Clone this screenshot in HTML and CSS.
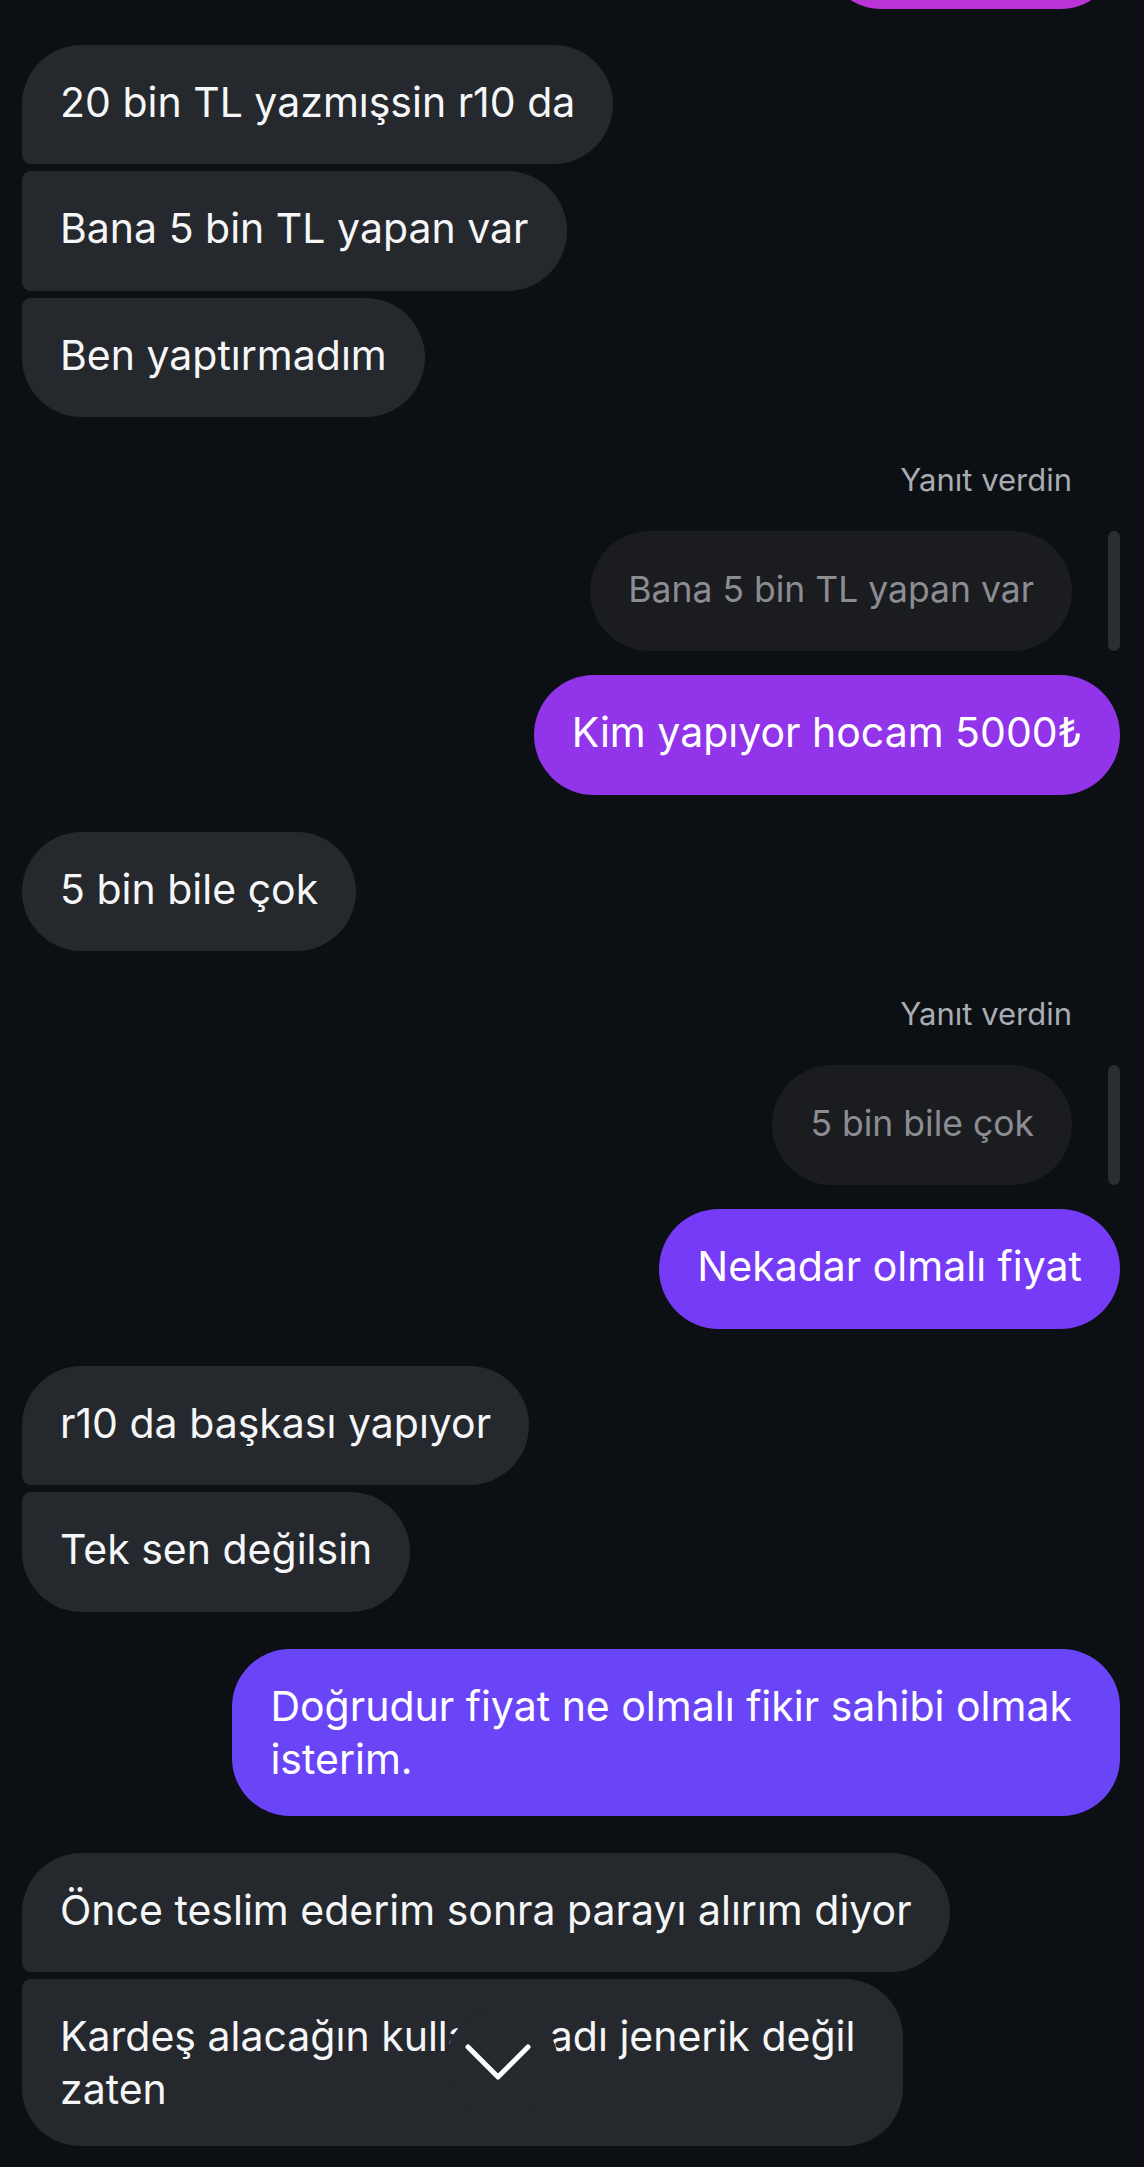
FILE: index.html
```html
<!DOCTYPE html>
<html lang="tr">
<head>
<meta charset="utf-8">
<title>Chat</title>
<link rel="stylesheet" href="styles.css">
</head>
<body>
<div class="chat">
  <div class="msg out top-cut"></div>

  <div class="msg in first gstart-top">20 bin TL yazmışsin r10 da</div>
  <div class="msg in mid tight">Bana 5 bin TL yapan var</div>
  <div class="msg in last tight">Ben yaptırmadım</div>

  <div class="reply">
    <div class="reply-label">Yanıt verdin</div>
    <div class="reply-row">
      <div class="quoted">Bana 5 bin TL yapan var</div>
      <div class="reply-bar"></div>
    </div>
  </div>
  <div class="msg out c-purple after-quote">Kim yapıyor hocam 5000₺</div>

  <div class="msg in gstart">5 bin bile çok</div>

  <div class="reply">
    <div class="reply-label">Yanıt verdin</div>
    <div class="reply-row">
      <div class="quoted">5 bin bile çok</div>
      <div class="reply-bar"></div>
    </div>
  </div>
  <div class="msg out c-violet after-quote">Nekadar olmalı fiyat</div>

  <div class="msg in first gstart">r10 da başkası yapıyor</div>
  <div class="msg in last tight">Tek sen değilsin</div>

  <div class="msg out c-indigo gstart multi">Doğrudur fiyat ne olmalı fikir sahibi olmak<br>isterim.</div>

  <div class="msg in first gstart">Önce teslim ederim sonra parayı alırım diyor</div>
  <div class="msg in last tight multi has-btn">Kardeş alacağın kullanıcı adı jenerik değil<br>zaten
    <div class="scroll-btn">
      <svg class="chev" viewBox="0 0 112 112" width="112" height="112" aria-hidden="true">
        <path d="M22 40 L52 70 L82 40" fill="none" stroke="#ffffff" stroke-width="5" stroke-linecap="round" stroke-linejoin="round"/>
      </svg>
    </div>
  </div>
</div>
</body>
</html>
```

FILE: styles.css
```css
* {
  box-sizing: border-box;
}

html,
body {
  margin: 0;
  padding: 0;
  background: #0c0f14;
}

body {
  width: 1144px;
  height: 2167px;
  overflow: hidden;
  font-family: Inter, "Noto Sans", "DejaVu Sans", sans-serif;
  color: #f5f6f7;
}

.chat {
  display: flex;
  flex-direction: column;
  padding: 0 24px 0 22px;
}

.msg {
  font-size: 41px;
  line-height: 53px;
  padding: 31px 38px 30px;
  min-height: 119.5px;
  border-radius: 60px;
  max-width: 946px;
}

.msg.multi {
  border-radius: 58px;
  padding-right: 48px;
}

.in {
  align-self: flex-start;
  background: #25282d;
}

.out {
  align-self: flex-end;
  color: #ffffff;
}

.in.first {
  border-bottom-left-radius: 9px;
}

.in.mid {
  border-top-left-radius: 9px;
  border-bottom-left-radius: 9px;
}

.in.last {
  border-top-left-radius: 9px;
}

.top-cut {
  width: 298px;
  height: 119px;
  margin-top: -111px;
  background: #b834d4;
}

.gstart-top {
  margin-top: 36px;
}

.gstart {
  margin-top: 37px;
}

.tight {
  margin-top: 7px;
}

.after-quote {
  margin-top: 24px;
}

.c-purple {
  background: #9234ea;
}

.c-violet {
  background: #763bf7;
}

.c-indigo {
  background: #6a45f8;
}

.reply {
  align-self: flex-end;
  display: flex;
  flex-direction: column;
  align-items: flex-end;
  margin-top: 43px;
}

.reply-label {
  font-size: 31px;
  line-height: 40px;
  color: #a9acb1;
  margin-right: 48px;
}

.reply-row {
  display: flex;
  align-items: stretch;
  gap: 36px;
  margin-top: 31px;
}

.quoted {
  display: flex;
  align-items: center;
  height: 120px;
  padding: 0 38px 4px;
  border-radius: 60px;
  background: #1a1c20;
  color: #8b8d92;
  font-size: 35.5px;
}

.reply-bar {
  width: 12px;
  border-radius: 6px;
  background: #2a2d32;
}

.has-btn {
  position: relative;
}

.scroll-btn {
  position: absolute;
  left: 424px;
  top: 28px;
  width: 112px;
  height: 112px;
  border-radius: 50%;
  background: #25282d;
}

.chev {
  display: block;
}
```
